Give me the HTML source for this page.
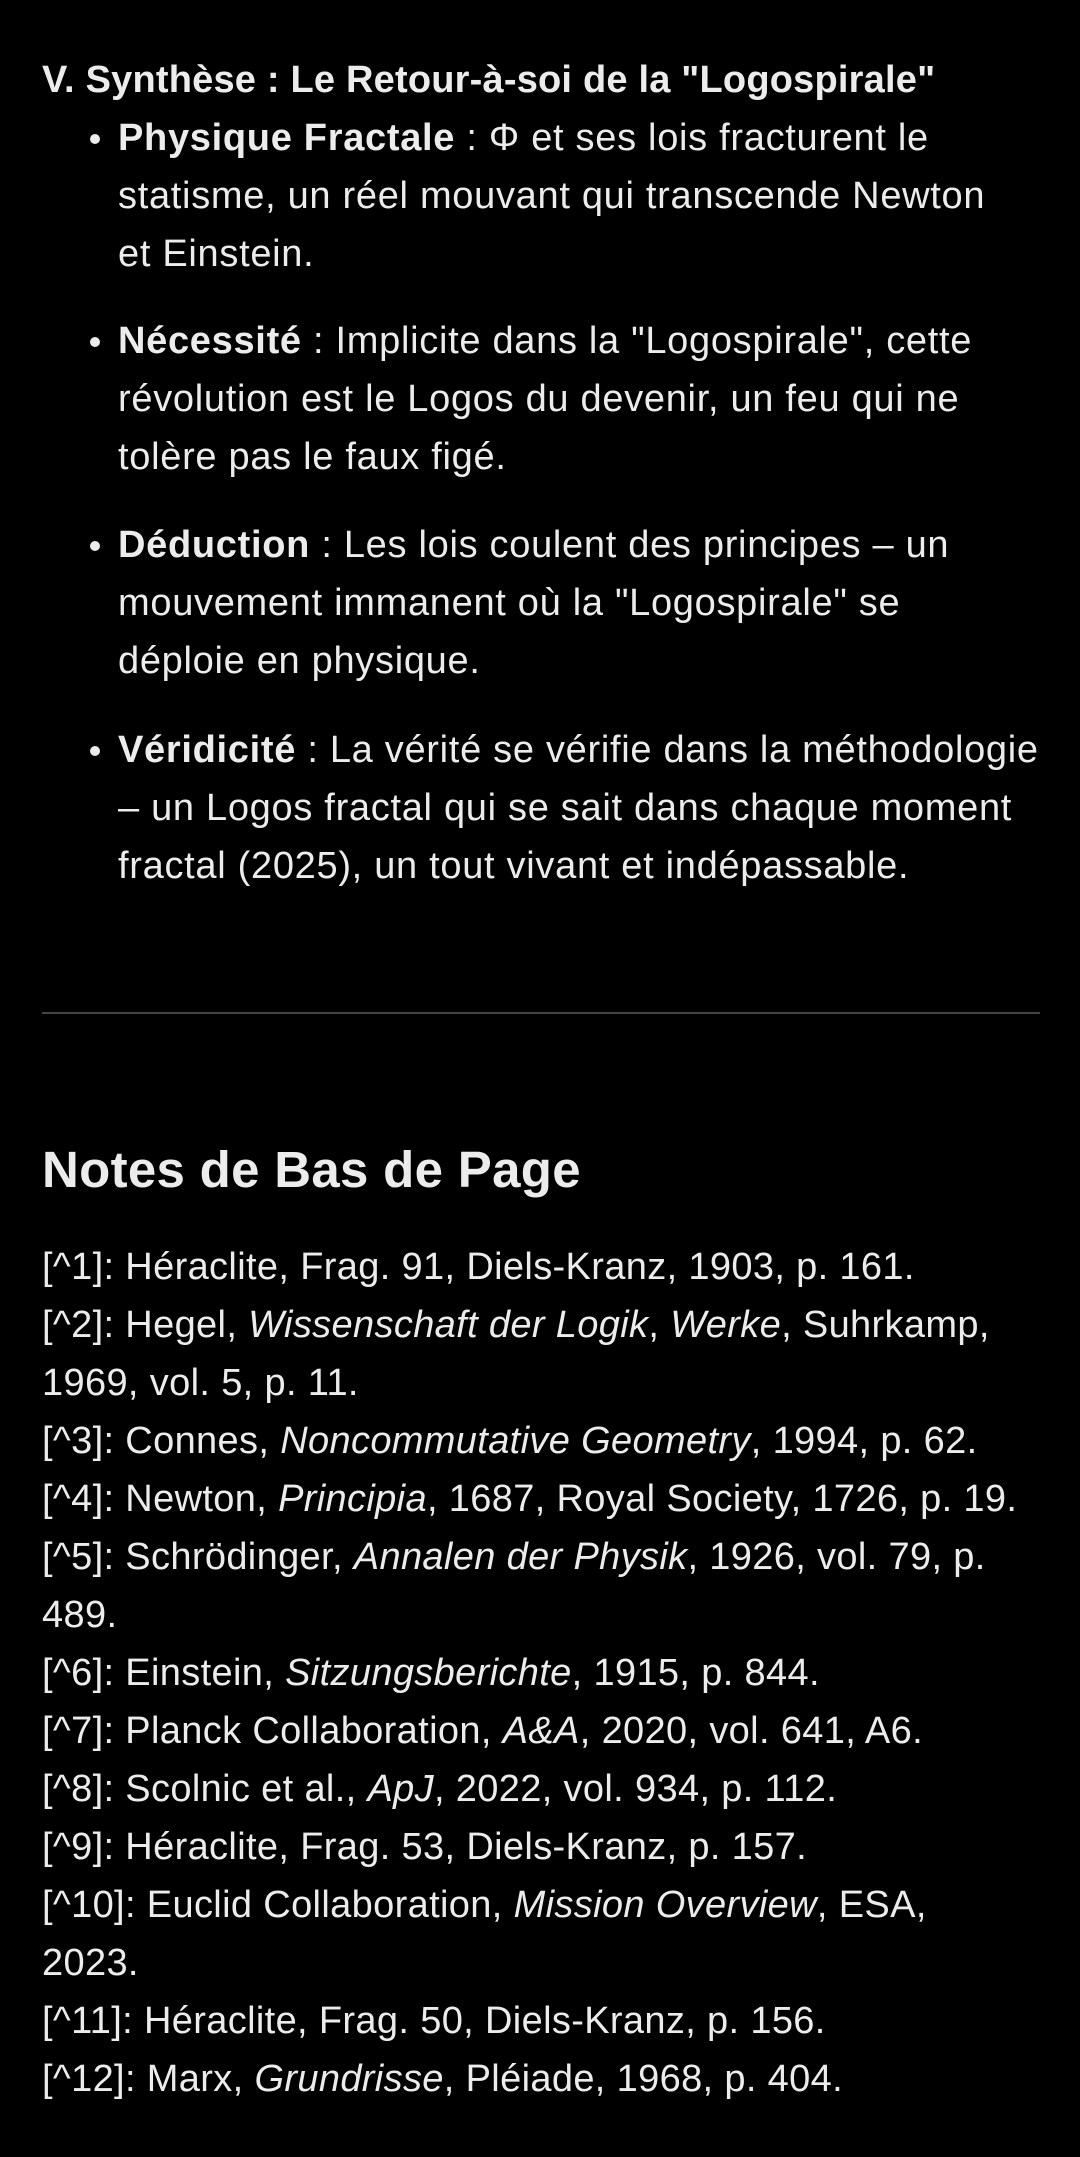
<!DOCTYPE html>
<html><head><meta charset="utf-8"><style>
html,body{margin:0;background:#000;width:1080px;height:2157px;overflow:hidden}
body{font-family:"Liberation Sans",sans-serif;color:#ececec;font-size:38px;letter-spacing:0.6px;position:relative}
.a{position:absolute;left:42px;line-height:58px;white-space:nowrap}
.li{left:118px;letter-spacing:0.7px}
.li::before{content:"";position:absolute;left:-28px;top:25px;width:10px;height:10px;border-radius:50%;background:#ececec}
b{font-weight:bold}
hr{position:absolute;left:42px;top:1012px;width:998px;margin:0;border:0;border-top:2px solid #444}
h2{position:absolute;left:42px;top:1135px;margin:0;font-size:51px;line-height:70px;font-weight:bold;letter-spacing:0.3px}
</style></head><body>
<div class="a" style="top:51px;letter-spacing:0.2px"><b>V. Synthèse : Le Retour-à-soi de la "Logospirale"</b></div>
<div class="a li" style="top:109px"><b>Physique Fractale</b> : Φ et ses lois fracturent le<br>statisme, un réel mouvant qui transcende Newton<br>et Einstein.</div>
<div class="a li" style="top:312px"><b>Nécessité</b> : Implicite dans la "Logospirale", cette<br>révolution est le Logos du devenir, un feu qui ne<br>tolère pas le faux figé.</div>
<div class="a li" style="top:516px"><b>Déduction</b> : Les lois coulent des principes – un<br>mouvement immanent où la "Logospirale" se<br>déploie en physique.</div>
<div class="a li" style="top:721px"><b>Véridicité</b> : La vérité se vérifie dans la méthodologie<br>– un Logos fractal qui se sait dans chaque moment<br>fractal (2025), un tout vivant et indépassable.</div>
<hr>
<h2>Notes de Bas de Page</h2>
<div class="a" style="top:1238px;letter-spacing:0.35px">[^1]: Héraclite, Frag. 91, Diels-Kranz, 1903, p. 161.<br>[^2]: Hegel, <i>Wissenschaft der Logik</i>, <i>Werke</i>, Suhrkamp,<br>1969, vol. 5, p. 11.<br>[^3]: Connes, <i>Noncommutative Geometry</i>, 1994, p. 62.<br>[^4]: Newton, <i>Principia</i>, 1687, Royal Society, 1726, p. 19.<br>[^5]: Schrödinger, <i>Annalen der Physik</i>, 1926, vol. 79, p.<br>489.<br>[^6]: Einstein, <i>Sitzungsberichte</i>, 1915, p. 844.<br>[^7]: Planck Collaboration, <i>A&amp;A</i>, 2020, vol. 641, A6.<br>[^8]: Scolnic et al., <i>ApJ</i>, 2022, vol. 934, p. 112.<br>[^9]: Héraclite, Frag. 53, Diels-Kranz, p. 157.<br>[^10]: Euclid Collaboration, <i>Mission Overview</i>, ESA,<br>2023.<br>[^11]: Héraclite, Frag. 50, Diels-Kranz, p. 156.<br>[^12]: Marx, <i>Grundrisse</i>, Pléiade, 1968, p. 404.</div>
</body></html>
